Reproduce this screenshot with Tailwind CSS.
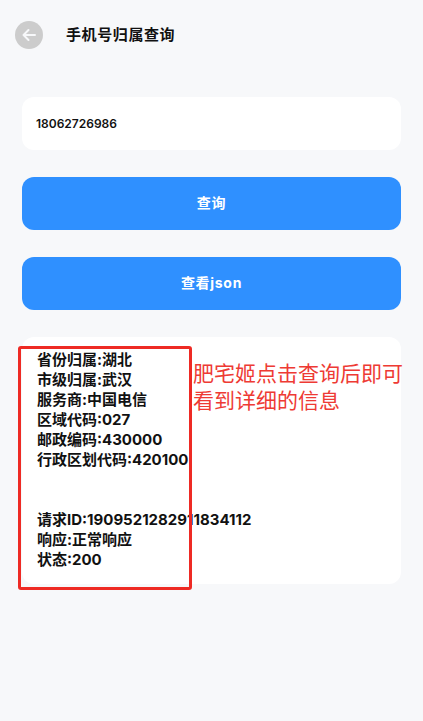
<!DOCTYPE html>
<html lang="zh">

<head>
  <meta charset="UTF-8">
  <title>手机号归属查询</title>
  <script src="https://cdn.jsdelivr.net/npm/@tailwindcss/browser@4"></script>
</head>

<body class="bg-[#f7f8fa] font-['Inter','Noto_Sans_CJK_SC',sans-serif]">
  <div class="relative w-[423px] h-[721px] overflow-hidden">
    <!-- header -->
    <div class="flex items-center pl-[15px] pt-[21px] h-[49px]">
      <div class="w-[28px] h-[28px] rounded-full bg-[#cccccc] flex items-center justify-center">
        <svg class="w-[16px] h-[16px]" viewBox="0 0 16 16" fill="none" stroke="#f7f8fa" stroke-width="2" stroke-linecap="round" stroke-linejoin="round">
          <path d="M14 8H2.5M7.5 3L2.5 8l5 5"></path>
        </svg>
      </div>
      <h1 class="ml-[23px] text-[15px] font-bold text-[#111] tracking-[0.6px]">手机号归属查询</h1>
    </div>

    <div class="px-[22px] pt-[48px] flex flex-col">
      <div class="h-[53px] bg-white rounded-[12px] flex items-center pl-[14px] text-[12px] font-semibold text-[#111]">18062726986</div>
      <button class="mt-[27px] h-[53px] pb-[2px] bg-[#2f90ff] rounded-[12px] text-white text-[14px] font-bold tracking-[0.7px]">查询</button>
      <button class="mt-[27px] h-[53px] pb-[2px] bg-[#2f90ff] rounded-[12px] text-white text-[14px] font-bold tracking-[0.7px]">查看json</button>

      <div class="mt-[27px] h-[247px] bg-white rounded-[12px] pl-[15px] pt-[13px] text-[15px] leading-[20px] font-bold text-[#111] whitespace-nowrap">
        <p>省份归属:湖北</p>
        <p>市级归属:武汉</p>
        <p>服务商:中国电信</p>
        <p>区域代码:027</p>
        <p>邮政编码:430000</p>
        <p>行政区划代码:420100</p>
        <p class="mt-[40px]">请求ID:1909521282911834112</p>
        <p>响应:正常响应</p>
        <p>状态:200</p>
      </div>
    </div>

    <!-- annotation drawn over the screenshot -->
    <div class="absolute left-[18px] top-[346px] w-[174px] h-[244px] border-[3px] border-[#ee2a24] rounded-[3px]"></div>
    <p class="absolute left-[193px] top-[360px] w-[215px] text-[21px] leading-[27px] text-[#ee3a34]">肥宅姬点击查询后即可看到详细的信息</p>
  </div>
</body>

</html>
